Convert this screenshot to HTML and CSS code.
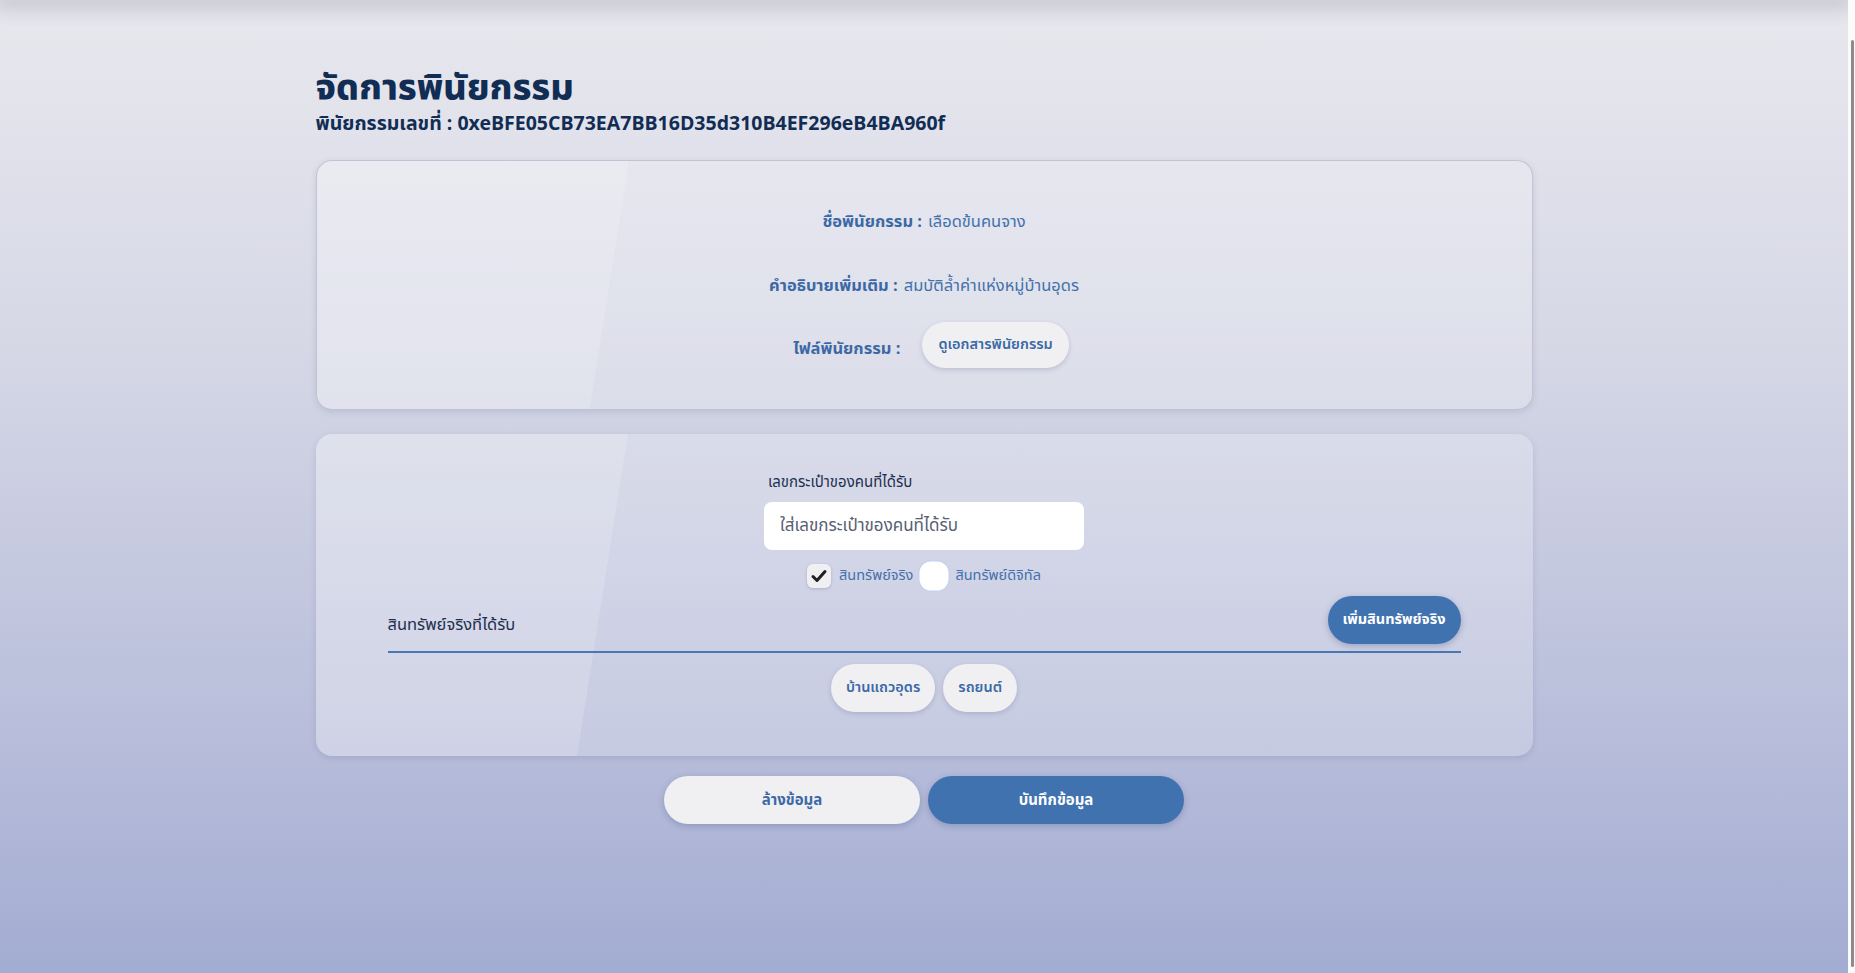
FILE: index.html
```html
<!DOCTYPE html>
<html lang="th">
<head>
<meta charset="utf-8">
<title>จัดการพินัยกรรม</title>
<link rel="stylesheet" href="styles.css">
</head>
<body>
<div class="topshade"></div>
<main class="page">
  <header class="head">
    <h1 class="title">จัดการพินัยกรรม</h1>
    <h2 class="subtitle">พินัยกรรมเลขที่ : 0xeBFE05CB73EA7BB16D35d310B4EF296eB4BA960f</h2>
  </header>

  <section class="card card-info">
    <div class="info-row r1"><span class="info-label">ชื่อพินัยกรรม :</span> <span class="info-value">เลือดข้นคนจาง</span></div>
    <div class="info-row r2"><span class="info-label">คำอธิบายเพิ่มเติม :</span> <span class="info-value">สมบัติล้ำค่าแห่งหมู่บ้านอุดร</span></div>
    <div class="info-row r3"><span class="info-label file-label">ไฟล์พินัยกรรม :</span><button class="pill-btn doc-btn">ดูเอกสารพินัยกรรม</button></div>
  </section>

  <section class="card card-form">
    <div class="field">
      <label class="field-label">เลขกระเป๋าของคนที่ได้รับ</label>
      <input class="field-input" type="text" placeholder="ใส่เลขกระเป๋าของคนที่ได้รับ">
    </div>
    <div class="checks">
      <span class="check checked"><svg viewBox="0 0 24 24" width="24" height="24"><path d="M6 12.5l4 4 8-9" fill="none" stroke="#1f2026" stroke-width="3" stroke-linecap="round" stroke-linejoin="round"/></svg></span>
      <span class="check-text">สินทรัพย์จริง</span>
      <span class="check focus"></span>
      <span class="check-text">สินทรัพย์ดิจิทัล</span>
    </div>
    <div class="asset-row">
      <span class="asset-label">สินทรัพย์จริงที่ได้รับ</span>
      <button class="primary-btn small">เพิ่มสินทรัพย์จริง</button>
    </div>
    <div class="chips">
      <button class="pill-btn chip">บ้านแถวอุดร</button>
      <button class="pill-btn chip">รถยนต์</button>
    </div>
  </section>

  <div class="actions">
    <button class="action-btn light">ล้างข้อมูล</button>
    <button class="action-btn primary">บันทึกข้อมูล</button>
  </div>
</main>
<div class="scrollbar"><div class="scroll-thumb"></div></div>
</body>
</html>
```

FILE: styles.css
```css
* { box-sizing: border-box; }
html, body { margin: 0; padding: 0; }
body {
  font-family: "Noto Sans Thai", "Noto Sans", "Liberation Sans", sans-serif;
  background: linear-gradient(180deg, #e8e8ee 0%, #d6d8e6 35%, #bcc1dc 70%, #a3acd2 100%);
  min-height: 100vh;
  padding-right: 7px;
  color: #152f55;
}
.topshade {
  height: 0;
  box-shadow: 0 0 20px 6px rgba(60, 60, 80, 0.3);
}
.page {
  width: 1217px;
  margin: 0 auto;
  padding-top: 68px;
  padding-bottom: 140px;
}
.head { margin-bottom: 22px; }
.title {
  margin: 0;
  font-size: 36px;
  line-height: 42px;
  font-weight: 800;
  color: #112d54;
}
.subtitle {
  margin: 0;
  font-size: 19.5px;
  line-height: 28px;
  font-weight: 700;
  color: #112d54;
}
.card {
  position: relative;
  overflow: hidden;
  border-radius: 16px;
  background: rgba(255, 255, 255, 0.22);
  box-shadow: 0 2px 6px rgba(90, 95, 130, 0.18);
}
.card::before {
  content: "";
  position: absolute;
  top: 0;
  bottom: 0;
  left: -200px;
  width: 512px;
  transform: skewX(-9deg);
  transform-origin: top left;
  background: rgba(255, 255, 255, 0.16);
  pointer-events: none;
}
.card > * { position: relative; }
.card-info {
  border: 1px solid rgba(190, 192, 210, 0.9);
  height: 250px;
  padding: 40px 0 0;
  display: flex;
  flex-direction: column;
  align-items: center;
}
.info-row {
  display: flex;
  align-items: center;
  height: 40px;
  font-size: 16.5px;
  color: #4471ac;
}
.info-row.r2 { margin-top: 24px; }
.info-row.r3 { margin-top: 17px; height: 46px; }
.info-label { font-weight: 700; color: #3c69a5; margin-right: 6px; }
.info-value { font-weight: 400; }
.file-label { margin-right: 22px; margin-top: 6px; margin-left: 14px; }
.pill-btn {
  font-family: inherit;
  border: 0;
  height: 46px;
  padding: 0 20px;
  border-radius: 23px;
  background: #f0f0f3;
  color: #3c69a5;
  font-size: 15px;
  font-weight: 600;
  box-shadow: 0 2px 5px rgba(60, 70, 110, 0.2);
}
.doc-btn { padding: 0 16px; font-size: 14.5px; }
.card-form {
  margin-top: 24px;
  padding: 38px 72px 44px;
  display: flex;
  flex-direction: column;
  align-items: center;
}
.field { width: 320px; display: flex; flex-direction: column; }
.field-label {
  font-size: 15px;
  line-height: 22px;
  color: #1d3050;
  padding-left: 4px;
  margin-bottom: 8px;
}
.field-input {
  height: 48px;
  border: 0;
  border-radius: 8px;
  background: #ffffff;
  padding: 0 16px;
  font-family: inherit;
  font-size: 17px;
  color: #333;
  outline: none;
}
.field-input::placeholder { color: #586073; }
.checks {
  margin-top: 10px;
  display: flex;
  align-items: center;
  height: 31px;
}
.check {
  width: 24px;
  height: 24px;
  border-radius: 6px;
  background: #f0f0f3;
  box-shadow: 0 1px 3px rgba(60, 70, 110, 0.25);
  display: inline-flex;
  align-items: center;
  justify-content: center;
}
.check.focus {
  background: #ffffff;
  border-radius: 9px;
  box-shadow: 0 0 0 2.5px #ffffff, 0 0 0 4px #c6d2ef;
  margin-left: 9px;
}
.check-text {
  margin-left: 8px;
  font-size: 14.5px;
  color: #4471ac;
}
.check.focus + .check-text { margin-left: 9px; }
.asset-row {
  margin-top: 5px;
  align-self: stretch;
  display: flex;
  align-items: center;
  justify-content: space-between;
  padding-bottom: 7px;
  border-bottom: 2px solid #4a77b3;
}
.asset-label {
  font-size: 16.5px;
  color: #1d3050;
  padding-top: 8px;
}
.primary-btn {
  font-family: inherit;
  border: 0;
  border-radius: 24px;
  background: #4072b0;
  color: #ffffff;
  font-weight: 700;
  font-size: 14.5px;
  box-shadow: 0 2px 6px rgba(40, 60, 110, 0.3);
}
.primary-btn.small { height: 48px; width: 133px; }
.chips {
  margin-top: 11px;
  display: flex;
  gap: 8px;
}
.chip { height: 48px; padding: 0 15px; border-radius: 24px; font-size: 14.5px; }
.actions {
  margin-top: 20px;
  display: flex;
  justify-content: center;
  gap: 8px;
}
.action-btn {
  font-family: inherit;
  width: 256px;
  height: 48px;
  border: 0;
  border-radius: 24px;
  font-size: 15px;
  font-weight: 700;
  box-shadow: 0 2px 6px rgba(40, 60, 110, 0.25);
}
.action-btn.light { background: #f0f0f3; color: #3c69a5; }
.action-btn.primary { background: #4072b0; color: #ffffff; }
.scrollbar {
  position: fixed;
  top: 0;
  right: 0;
  bottom: 0;
  width: 7px;
  background: #fbfbfc;
}
.scroll-thumb {
  position: absolute;
  top: 40px;
  bottom: 6px;
  right: 1px;
  width: 3px;
  border-radius: 2px;
  background: #8c8c8c;
}
```
